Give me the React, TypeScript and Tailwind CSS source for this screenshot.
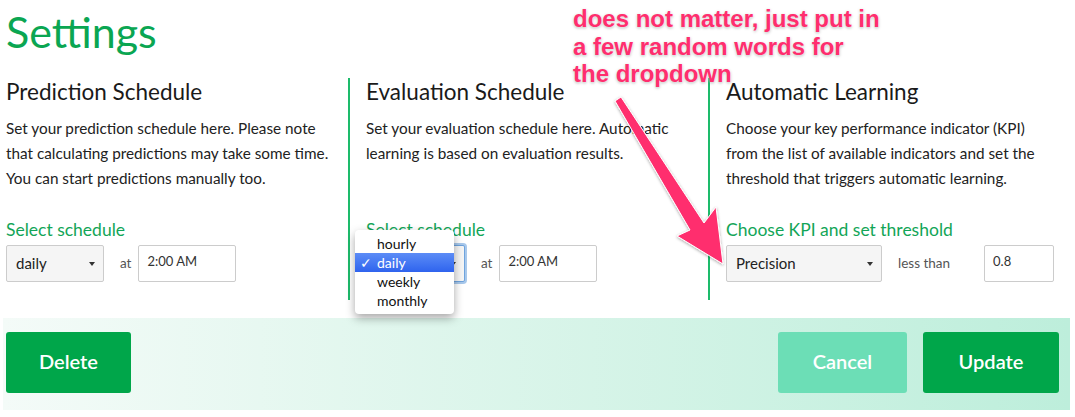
import React from 'react';

const Caret = () => (
  <span className="ml-auto border-x-[3px] border-t-[4px] border-x-transparent border-t-[#333]" />
);

const SelectBox = ({ value, width, focused }: { value: string; width: string; focused?: boolean }) => (
  <div
    className={`flex h-[37px] items-center rounded-[2px] border bg-[#f5f5f5] pl-[9px] pr-[8px] text-[15px] text-[#222] ${width} ${
      focused ? 'border-[#6ea3dd] shadow-[0_0_0_2px_rgba(110,163,221,0.6)]' : 'border-[#cccccc]'
    }`}
  >
    <span>{value}</span>
    <Caret />
  </div>
);

const TextBox = ({ value, width }: { value: string; width: string }) => (
  <div className={`flex h-[37px] items-center rounded-[2px] border border-[#cccccc] bg-white pl-[8px] pb-[3px] text-[13px] text-[#333] ${width}`}>
    {value}
  </div>
);

const Column = ({
  title,
  lines,
  label,
  children,
  first,
}: {
  title: string;
  lines: string[];
  label: string;
  children: React.ReactNode;
  first?: boolean;
}) => (
  <div className={`flex h-[222px] flex-col ${first ? 'w-[342px]' : 'w-[360px] border-l-2 border-[#1dbb6b] pl-[16px]'}`}>
    <h2 className="-mt-[1px] text-[22.5px] leading-[30px] text-[#1a1a1a]">{title}</h2>
    <div className="mt-[9px] text-[15.3px] leading-[25px] text-[#222]">
      {lines.map((l) => (
        <div key={l}>{l}</div>
      ))}
    </div>
    <div className="mt-auto mb-[18px]">
      <div className="text-[17.5px] leading-[20px] text-[#12a557]">{label}</div>
      <div className="mt-[5px] flex items-center">{children}</div>
    </div>
  </div>
);

export default function App() {
  return (
    <div className="relative h-[417px] w-[1075px] overflow-hidden bg-white font-['Lato','Noto_Sans',sans-serif]">
      <h1 className="pl-[6px] pt-[7px] text-[43px] leading-[50px] text-[#0aa652]">Settings</h1>

      <div className="mt-[21px] flex pl-[6px]">
        <Column
          first
          title="Prediction Schedule"
          lines={[
            'Set your prediction schedule here. Please note',
            'that calculating predictions may take some time.',
            'You can start predictions manually too.',
          ]}
          label="Select schedule"
        >
          <SelectBox value="daily" width="w-[98px]" />
          <span className="ml-[16px] mr-[7px] text-[13.5px] text-[#555]">at</span>
          <TextBox value="2:00 AM" width="w-[98px]" />
        </Column>
        <Column
          title="Evaluation Schedule"
          lines={['Set your evaluation schedule here. Automatic', 'learning is based on evaluation results.']}
          label="Select schedule"
        >
          <SelectBox value="daily" width="w-[99px]" focused />
          <span className="ml-[16px] mr-[7px] text-[13.5px] text-[#555]">at</span>
          <TextBox value="2:00 AM" width="w-[98px]" />
        </Column>
        <Column
          title="Automatic Learning"
          lines={[
            'Choose your key performance indicator (KPI)',
            'from the list of available indicators and set the',
            'threshold that triggers automatic learning.',
          ]}
          label="Choose KPI and set threshold"
        >
          <SelectBox value="Precision" width="w-[156px]" />
          <span className="ml-[16px] mr-[34px] text-[13.5px] text-[#555]">less than</span>
          <TextBox value="0.8" width="w-[70px]" />
        </Column>
      </div>

      <div className="ml-[3px] mt-[18px] flex h-[92px] w-[1067px] items-start bg-gradient-to-r from-[#f4fbf8] to-[#bdeedb] px-[3px] pt-[14px]">
        <button className="h-[61px] w-[125px] rounded-[3px] bg-[#00a64a] pb-[4px] text-[20px] font-semibold text-white">Delete</button>
        <button className="ml-auto h-[61px] w-[129px] rounded-[3px] bg-[#6cdeb6] pb-[4px] text-[20px] font-semibold text-white">Cancel</button>
        <button className="ml-[16px] mr-[8px] h-[61px] w-[136px] rounded-[3px] bg-[#00a64a] pb-[4px] text-[20px] font-semibold text-white">Update</button>
      </div>

      {/* native dropdown list, open */}
      <div className="absolute left-[355px] top-[230px] w-[99px] rounded-[4px] bg-white py-[4px] text-[14px] leading-[19px] text-[#111] shadow-[0_4px_10px_rgba(0,0,0,0.35)]">
        <div className="pl-[22px]">hourly</div>
        <div className="flex bg-gradient-to-b from-[#5c8cf6] to-[#2f63ee] text-white">
          <span className="w-[22px] pl-[5px]">✓</span>daily
        </div>
        <div className="pl-[22px]">weekly</div>
        <div className="pl-[22px]">monthly</div>
      </div>

      {/* annotation */}
      <div className="absolute left-[573px] top-[5px] font-['Liberation_Sans',Arial,sans-serif] text-[24px] font-bold leading-[27.5px] text-[#ff2e6e] [text-shadow:0_0_3px_#fff,0_1px_3px_rgba(0,0,0,0.35)]">
        <div>does not matter, just put in</div>
        <div>a few random words for</div>
        <div>the dropdown</div>
      </div>
      <svg className="absolute left-0 top-0" width="1075" height="417" style={{ pointerEvents: 'none' }}>
        <defs>
          <filter id="sh" x="-20%" y="-20%" width="140%" height="140%">
            <feDropShadow dx="0" dy="1" stdDeviation="1.5" floodColor="#000" floodOpacity="0.35" />
          </filter>
        </defs>
        <polygon
          filter="url(#sh)"
          fill="#ff2e6e"
          stroke="#fff"
          strokeWidth="1"
          strokeLinejoin="round"
          points="615,101 621,97 704,223 716,207 723,264 677,236 690,230"
        />
      </svg>
    </div>
  );
}
